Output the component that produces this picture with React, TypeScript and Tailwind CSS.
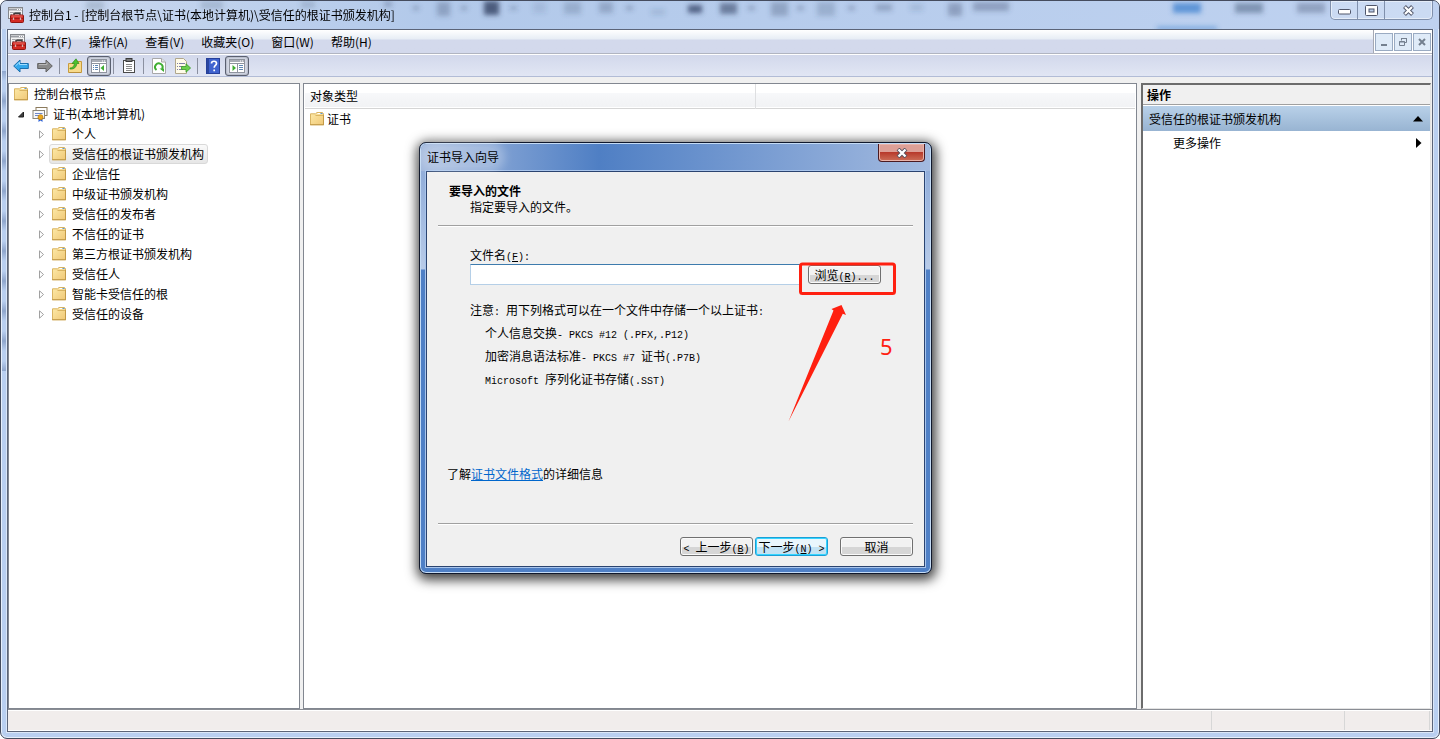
import { useState, type ReactNode } from 'react';

const stores = [
  '个人',
  '受信任的根证书颁发机构',
  '企业信任',
  '中级证书颁发机构',
  '受信任的发布者',
  '不信任的证书',
  '第三方根证书颁发机构',
  '受信任人',
  '智能卡受信任的根',
  '受信任的设备',
];

const menus = ['文件(F)', '操作(A)', '查看(V)', '收藏夹(O)', '窗口(W)', '帮助(H)'];

// x, y, width, height, opacity of the shapes showing through the glass title bar
const shades = [
  [85, 0, 18, 9, 0.2], [200, 0, 22, 8, 0.2], [300, 0, 14, 7, 0.2], [383, 0, 8, 6, 0.3],
  [412, 5, 6, 4, 0.35], [436, 1, 13, 14, 0.3], [460, 5, 6, 4, 0.35], [483, 0, 15, 14, 0.85],
  [509, 5, 7, 4, 0.3], [532, 1, 13, 11, 0.12], [563, 1, 17, 12, 0.22], [598, 1, 14, 11, 0.28],
  [625, 5, 7, 4, 0.35], [650, 8, 14, 6, 0.15], [687, 4, 14, 8, 0.8], [719, 2, 17, 11, 0.6],
  [747, 5, 7, 4, 0.35], [770, 1, 17, 14, 0.3], [796, 5, 7, 4, 0.35], [816, 1, 18, 14, 0.22],
  [847, 5, 7, 4, 0.35], [875, 3, 16, 7, 0.3], [909, 3, 13, 7, 0.15], [947, 2, 14, 13, 0.35],
  [972, 1, 36, 9, 0.35], [1234, 2, 28, 10, 0.45], [1296, 2, 28, 10, 0.35],
];

function ConsoleIcon() {
  return (
    <svg width="16" height="16" viewBox="0 0 16 16" className="shrink-0">
      <rect x="0.5" y="0.5" width="14" height="11" fill="#f4f4f4" stroke="#85888d" />
      <path d="M1 2.500h13" stroke="#9a9da3" strokeWidth="2" />
      <path d="M9 2.500h1M11 2.500h1M13 2.500h1" stroke="#fff" />
      <path d="M2 5.500h3M2 7.500h2M2 9.500h1M7 5.500h6" stroke="#a5a8ad" />
      <path d="M6 8V6.300h6V8" fill="none" stroke="#3c3c3c" strokeWidth="1.400" />
      <rect x="2.500" y="8" width="13" height="7.500" rx="1" fill="#d42c24" stroke="#8f1712" />
      <path d="M3.500 9h11" stroke="#ee7068" />
      <path d="M3 11.500h12" stroke="#a51b15" />
      <path d="M5.500 10.500v2.500M12.500 10.500v2.500" stroke="#d8b0ae" strokeWidth="1.300" />
    </svg>
  );
}

function FolderIcon() {
  return (
    <svg width="16" height="16" viewBox="0 0 16 16" className="shrink-0">
      <defs>
        <linearGradient id="folder" x1="0" y1="0" x2="1" y2="1">
          <stop offset="0" stopColor="#fdeaa8" />
          <stop offset="1" stopColor="#f0c877" />
        </linearGradient>
      </defs>
      <path d="M1.500 2.800h5L8 1.500h5.500l1 1.300v11h-13z" fill="url(#folder)" stroke="#d9b462" />
      <path d="M8.500 2.500h3" stroke="#fff" />
      <path d="M11.500 2.500h2" stroke="#5a97d6" />
      <path d="M6.500 4.500h8" stroke="#d9b462" />
      <path d="M14.500 4v10M1 13.700h14" stroke="#c29a48" />
    </svg>
  );
}

function CertIcon() {
  return (
    <svg width="16" height="16" viewBox="0 0 16 16" className="shrink-0">
      <rect x="4" y="1.500" width="11" height="8" fill="#fff" stroke="#8b7a5c" />
      <rect x="1" y="4.500" width="11.500" height="8" fill="#f8f8f8" stroke="#8b8577" />
      <path d="M3 7.500h7.500M3 9.500h4" stroke="#6d87c9" />
      <path d="M6.500 12v4l2-1.500 2 1.500v-4z" fill="#2d62d8" />
      <circle cx="8.500" cy="11.200" r="2.500" fill="#eba91c" stroke="#b9770c" strokeWidth="0.700" />
    </svg>
  );
}

function Expander({ open = false }: { open?: boolean }) {
  return (
    <svg width="9" height="9" viewBox="0 0 9 9" className="shrink-0">
      {open ? (
        <path d="M6.500 2v5h-5z" fill="#404040" stroke="#202020" />
      ) : (
        <path d="M2.500 0.800v7.400L6.500 4.500z" fill="#fff" stroke="#a0a0a0" />
      )}
    </svg>
  );
}

function PaneIcon({ right = false }: { right?: boolean }) {
  return (
    <svg width="18" height="16" viewBox="0 0 18 16">
      <rect x="1.500" y="1.500" width="15" height="13" fill="#fff" stroke="#8f949e" />
      <path d="M2 3h14" stroke="#a9adb6" strokeWidth="2" />
      <path d="M12 3h1M14 3h1" stroke="#fff" />
      <path d="M2 5.500h14M9.500 6v8" stroke="#8f949e" />
      {right ? (
        <>
          <path d="M4.500 7v6L8 10z" fill="#3fae32" />
          <path d="M11 7.500h4M11 9.500h4M11 11.500h4" stroke="#5f88b4" />
        </>
      ) : (
        <>
          <path d="M14 7v6l-3.500-3z" fill="#3fae32" />
          <path d="M3 7.500h1M5 7.500h3M3 9.500h1M5 9.500h3M3 11.500h1M5 11.500h3" stroke="#5f88b4" />
        </>
      )}
    </svg>
  );
}

function ToolButton({ label, active, children }: { label: string; active?: boolean; children: ReactNode }) {
  return (
    <button
      aria-label={label}
      className={`grid h-5 w-6 place-items-center rounded-[3px] border ${
        active ? 'border-[#5a6070] bg-[#d3d7e4] shadow-[inset_0_0_2px_#7a8090]' : 'border-transparent'
      }`}
    >
      {children}
    </button>
  );
}

function Separator() {
  return <span className="mr-[3px] ml-0.5 h-4 w-px bg-[#8b90a0]" />;
}

function Toolbar() {
  return (
    <div className="flex h-[23px] items-center border-t border-b border-t-white border-b-[#b2bcd6] bg-linear-to-b from-[#d2d8eb] to-[#e1e6f4] pl-px">
      <ToolButton label="后退">
        <svg width="16" height="14" viewBox="0 0 16 14">
          <path d="M0.700 7L7 1v3.500h8.300v5H7V13z" fill="#35a8ec" stroke="#1b6fae" />
          <path d="M2.500 7L6.500 3.200v2.300H14" fill="none" stroke="#9edcff" />
        </svg>
      </ToolButton>
      <ToolButton label="前进">
        <svg width="16" height="14" viewBox="0 0 16 14">
          <path d="M15.300 7L9 1v3.500H0.700v5H9V13z" fill="#8b8b8b" stroke="#626262" />
          <path d="M2 5.500h8V3.500" fill="none" stroke="#b9b9b9" />
        </svg>
      </ToolButton>
      <Separator />
      <ToolButton label="向上一级">
        <svg width="16" height="16" viewBox="0 0 16 16">
          <path d="M1.500 5.500h5l2-2h6v11h-13z" fill="#f7da8a" stroke="#c99c3e" />
          <path d="M2 14.500h12" stroke="#b98f3c" />
          <path d="M3 10c3 0 4-2 4.500-4.500H5L9 0.800l3 4.700H9.800C9.500 9 7 11.500 3 11z" fill="#4cc22e" stroke="#2f8a1b" strokeWidth="0.700" />
        </svg>
      </ToolButton>
      <ToolButton label="显示/隐藏控制台树" active>
        <PaneIcon />
      </ToolButton>
      <Separator />
      <ToolButton label="剪贴板">
        <svg width="14" height="16" viewBox="0 0 14 16">
          <rect x="1.500" y="2.500" width="11" height="12" fill="#fff" stroke="#4a4a4a" />
          <rect x="4" y="0.500" width="6" height="3" fill="#7a7a7a" stroke="#3a3a3a" />
          <path d="M4 6.500h6M4 8.500h6M4 10.500h6M4 12.500h6" stroke="#8a8a8a" />
        </svg>
      </ToolButton>
      <Separator />
      <ToolButton label="刷新">
        <svg width="14" height="16" viewBox="0 0 14 16">
          <path d="M0.500 0.500h9l4 3.500v11.500h-13z" fill="#fff" stroke="#a8a8a8" />
          <path d="M9.500 0.500V4h4" fill="#e6e6e6" stroke="#a8a8a8" />
          <path d="M4.500 12A3.700 3.700 0 1 1 10 11" fill="none" stroke="#3fae32" strokeWidth="2" />
          <path d="M7.500 10.500h4.500v3.500z" fill="#3fae32" />
        </svg>
      </ToolButton>
      <ToolButton label="导出列表">
        <svg width="16" height="16" viewBox="0 0 16 16">
          <path d="M0.500 0.500h8l3 3v12h-11z" fill="#fffbe8" stroke="#b0a78c" />
          <path d="M2 5.500h1M4 5.500h6M2 8.500h1M4 8.500h4M2 11.500h1M4 11.500h4" stroke="#7d7fa8" />
          <path d="M6.500 8.500H11V5.800l4.600 4.200-4.600 4.200v-2.700H6.500z" fill="#6bd04d" stroke="#3a9a26" strokeWidth="0.800" />
        </svg>
      </ToolButton>
      <Separator />
      <ToolButton label="帮助">
        <svg width="14" height="16" viewBox="0 0 14 16">
          <rect x="0.500" y="0.500" width="13" height="15" fill="#3f63cf" stroke="#26409a" />
          <path d="M2 1v14" stroke="#2b479f" strokeWidth="2" />
          <path d="M5.500 5.500c0-3 5-3 5 0 0 2-2.300 2-2.300 4.200M8.200 11.500v1.800" fill="none" stroke="#fff" strokeWidth="1.700" />
        </svg>
      </ToolButton>
      <ToolButton label="显示/隐藏操作窗格" active>
        <PaneIcon right />
      </ToolButton>
    </div>
  );
}

function Tree() {
  const [selected, setSelected] = useState(1);
  return (
    <section className="w-[292px] shrink-0 border border-[#828790] bg-white">
      <div className="flex h-5 items-center gap-[5px] pl-1">
        <FolderIcon />
        <span>控制台根节点</span>
      </div>
      <div className="flex h-5 items-center pl-2">
        <Expander open />
        <span className="ml-1.5 flex items-center gap-[5px]">
          <CertIcon />
          证书(本地计算机)
        </span>
      </div>
      <ul>
        {stores.map((name, i) => (
          <li key={name} className="flex h-5 items-center gap-[3px] pl-7">
            <Expander />
            <button
              onClick={() => setSelected(i)}
              className={`flex h-5 items-center gap-[5px] rounded-[3px] border px-px pr-[3px] ${
                i === selected
                  ? 'border-[#d9d9d9] bg-linear-to-b from-[#fafafa] to-[#e6e6e6]'
                  : 'border-transparent'
              }`}
            >
              <FolderIcon />
              {name}
            </button>
          </li>
        ))}
      </ul>
    </section>
  );
}

function ObjectList() {
  return (
    <section className="min-w-0 flex-1 border border-[#828790] bg-white px-px">
      <table className="w-full table-fixed border-collapse text-left">
        <thead>
          <tr className="h-6 border-b border-[#d5d5d5] bg-linear-to-b from-white from-40% via-[#f7f8fa] via-41% to-[#f1f2f4]">
            <th className="w-[450px] border-r border-[#dedfe1] pl-[5px] font-normal">对象类型</th>
            <th aria-label="空列" />
          </tr>
        </thead>
        <tbody>
          <tr>
            <td className="h-[22px] pl-1">
              <span className="flex items-center gap-0.5">
                <FolderIcon />
                证书
              </span>
            </td>
          </tr>
        </tbody>
      </table>
    </section>
  );
}

function Actions() {
  return (
    <aside className="ml-px w-[290px] shrink-0 border-t-2 border-r border-b border-l-2 border-t-[#6c6c6c] border-r-[#e3e3e3] border-b-[#e3e3e3] border-l-[#6c6c6c] bg-white">
      <h2 className="flex h-5 items-center border-b border-[#a0a0a0] bg-[#f0f0f0] pl-1 font-bold">操作</h2>
      <button className="mt-px flex h-[25px] w-full items-center justify-between bg-linear-to-b from-[#b9d1e9] to-[#98b4d2] pr-[7px] pl-1.5">
        受信任的根证书颁发机构
        <svg width="10" height="6" viewBox="0 0 10 6">
          <path d="M5 0l5 5.500H0z" />
        </svg>
      </button>
      <button className="flex h-6 w-full items-center justify-between pr-2 pl-[30px]">
        更多操作
        <svg width="6" height="10" viewBox="0 0 6 10">
          <path d="M0 0v10l5.500-5z" />
        </svg>
      </button>
    </aside>
  );
}

// half-width latin text, 6px per character beside 12px hanzi
function Half({ children }: { children: ReactNode }) {
  return <span className="font-['Liberation_Mono',monospace] text-[10px] leading-none whitespace-pre">{children}</span>;
}

function DialogButton({ children, primary }: { children: ReactNode; primary?: boolean }) {
  return (
    <button
      className={`flex h-[19px] w-[73px] items-center justify-center rounded-[3px] border whitespace-nowrap ${
        primary
          ? 'border-[#1c9fd6] bg-linear-to-b from-[#eaf6fc] from-50% to-[#c3e2f3] to-51% shadow-[inset_0_0_0_1px_#35d5ff]'
          : 'border-[#707070] bg-linear-to-b from-[#f2f2f2] from-50% to-[#d6d6d6] to-51% shadow-[inset_0_0_0_1px_#fafafa]'
      }`}
    >
      <span className="leading-4">{children}</span>
    </button>
  );
}

function ImportWizard() {
  const [file, setFile] = useState('');
  return (
    <div
      role="dialog"
      aria-label="证书导入向导"
      className="absolute top-[141px] left-[418px] w-[513px] rounded-[7px] border border-[#10182c] bg-[#5080c5] bg-linear-to-b from-[#86a5d5] via-[#b8cbe8] via-[126px] to-[#4f80c6] to-[127px] px-1.5 pb-1.5 shadow-[inset_0_0_0_1px_#c4dbf5,1px_3px_12px_3px_rgba(0,0,0,0.75)]"
    >
      <div className="-mx-[5px] mt-px flex h-[27px] items-start justify-between rounded-t-[6px] bg-linear-to-r from-[#a3b9dd] via-[#4f7fc4] via-35% to-[#a3badf] pl-1.5">
        <span className="mt-[3px] rounded-full bg-white/25 shadow-[0_0_8px_6px_rgba(255,255,255,0.25)]">证书导入向导</span>
        <button
          aria-label="关闭"
          className="mr-[5px] grid h-[18px] w-[47px] place-items-center rounded-b-[4px] border border-t-0 border-[#4b1a20] bg-linear-to-b from-[#dda097] from-45% via-[#b83a2c] via-50% to-[#cc6e58] shadow-[inset_0_0_0_1px_#e9b3aa]"
        >
          <svg width="12" height="10" viewBox="0 0 12 10">
            <path d="M2 1l8 8M10 1L2 9" stroke="#55505c" strokeWidth="4" />
            <path d="M2.500 1.500l7 7M9.500 1.500l-7 7" stroke="#fff" strokeWidth="2.400" />
          </svg>
        </button>
      </div>

      <div className="border border-[#2b4470] bg-[#f0f0f0] pb-[10px] shadow-[0_0_0_1px_#a9c5ec]">
        <div className="mx-[11px] h-[54px] border-b border-[#a0a0a0] pt-[11px] pl-[11px] leading-4 shadow-[0_1px_0_#fff]">
          <h1 className="font-bold">要导入的文件</h1>
          <p className="pl-[21px]">指定要导入的文件。</p>
        </div>

        <div className="h-[297px] pt-5 pl-[43px]">
          <label htmlFor="file" className="block h-[18px] leading-[18px]">
            文件名<Half>(<u>F</u>):</Half>
          </label>
          <div className="flex items-center">
            <input
              id="file"
              value={file}
              onChange={(e) => setFile(e.target.value)}
              className="h-[21px] w-[332px] border border-[#b5cfe7] border-t-[#3d7bad] bg-white px-1 outline-none"
            />
            <span className="ml-1.5">
              <DialogButton>
                浏览<Half>(<u>R</u>)...</Half>
              </DialogButton>
            </span>
          </div>
          <p className="mt-3.5 leading-[22px]">
            注意<Half>: </Half>用下列格式可以在一个文件中存储一个以上证书<Half>:</Half>
          </p>
          <ul className="pl-[15px] leading-[23px]">
            <li>
              个人信息交换<Half>- PKCS #12 (.PFX,.P12)</Half>
            </li>
            <li>
              加密消息语法标准<Half>- PKCS #7 </Half>证书<Half>(.P7B)</Half>
            </li>
            <li>
              <Half>Microsoft </Half>序列化证书存储<Half>(.SST)</Half>
            </li>
          </ul>
          <p className="mt-[74px] -ml-[23px]">
            了解
            <a href="#formats" className="text-[#0066cc] underline">
              证书文件格式
            </a>
            的详细信息
          </p>
        </div>

        <div className="mx-[11px] flex justify-end border-t border-[#a0a0a0] pt-[13px] shadow-[inset_0_1px_0_#fff]">
          <DialogButton>
            <Half>&lt; </Half>上一步<Half>(<u>B</u>)</Half>
          </DialogButton>
          <span className="mr-3 ml-0.5">
            <DialogButton primary>
              下一步<Half>(<u>N</u>) &gt;</Half>
            </DialogButton>
          </span>
          <DialogButton>取消</DialogButton>
        </div>
      </div>
    </div>
  );
}

function Annotation() {
  return (
    <div className="pointer-events-none absolute top-[261px] left-[787px] text-[#ff2010]">
      <svg width="110" height="160" viewBox="0 0 110 160" fill="currentColor">
        <rect x="12.500" y="2" width="94" height="29.500" rx="2" fill="none" stroke="currentColor" strokeWidth="3" />
        <path d="M53.500 43L58 53l-3.200-1.200L0.500 159.500 45.500 48.500 43.500 47z" />
      </svg>
      <span className="absolute top-[68px] left-[92px] font-['Noto_Sans',sans-serif] text-[22px] leading-8">5</span>
    </div>
  );
}

function TitleBar() {
  return (
    <header className="relative flex h-7 items-center overflow-hidden rounded-t-[6px] bg-linear-to-r from-[#cddaf0] via-[#b2c9ea] via-30% to-[#bfd2f0]">
      <svg className="absolute top-0 left-0 h-7 w-[1340px]" viewBox="0 0 1340 28">
        <defs>
          <filter id="soft" x="-20" y="-20" width="1380" height="68" filterUnits="userSpaceOnUse">
            <feGaussianBlur stdDeviation="2.600" />
          </filter>
        </defs>
        <g filter="url(#soft)">
          {shades.map(([x, y, w, h, o]) => (
            <rect key={x} x={x} y={y} width={w} height={h} fill="#38496a" opacity={o} />
          ))}
          <rect x="1172" y="2" width="28" height="10" fill="#3e82cf" opacity="0.750" />
          <rect x="1156" y="26" width="60" height="3" fill="#3e82cf" opacity="0.700" />
        </g>
      </svg>
      <div className="relative flex items-center gap-[5px] pl-[7px]">
        <ConsoleIcon />
        <span>控制台1 - [控制台根节点\证书(本地计算机)\受信任的根证书颁发机构]</span>
      </div>
      <div className="relative mr-1.5 ml-auto flex h-[19px] self-start rounded-b-[5px] border border-t-0 border-[#8090ac] bg-white/20 shadow-[inset_0_0_0_1px_rgba(255,255,255,0.5)]">
        <button aria-label="最小化" className="grid w-[27px] place-items-center border-r border-[#8090ac] pt-1">
          <svg width="13" height="6" viewBox="0 0 13 6">
            <rect x="0.500" y="0.500" width="12" height="4.500" rx="1" fill="#fff" stroke="#50566a" />
          </svg>
        </button>
        <button aria-label="最大化" className="grid w-[27px] place-items-center border-r border-[#8090ac]">
          <svg width="13" height="11" viewBox="0 0 13 11">
            <rect x="0.500" y="0.500" width="12" height="10" rx="1" fill="#fff" stroke="#50566a" />
            <rect x="4" y="4" width="5" height="3" fill="#b9cce9" stroke="#50566a" />
          </svg>
        </button>
        <button aria-label="关闭" className="grid w-[47px] place-items-center">
          <svg width="13" height="11" viewBox="0 0 13 11">
            <path d="M2.500 1.500l8 8M10.500 1.500l-8 8" stroke="#50566a" strokeWidth="4" />
            <path d="M3 2l7 7M10 2L3 9" stroke="#fff" strokeWidth="2.200" />
          </svg>
        </button>
      </div>
    </header>
  );
}

function MenuBar() {
  return (
    <nav className="flex h-6 items-center border-b border-[#b1b5c1] bg-linear-to-b from-white via-[#e7edf5] via-[9px] to-[#d3d9ec] to-[10px]">
      <span className="ml-0.5">
        <ConsoleIcon />
      </span>
      <div className="flex gap-[17px] pl-[7px]">
        {menus.map((m) => (
          <button key={m}>{m}</button>
        ))}
      </div>
      <div className="ml-auto flex h-full items-center gap-px border-l border-[#a5a9b4] bg-white pr-px pl-px">
        <button aria-label="最小化子窗口" className="grid size-[18px] place-items-center border border-[#9aabc2] bg-[#dfebf8]">
          <svg width="10" height="10" viewBox="0 0 10 10">
            <path d="M2 8h6" stroke="#74808f" strokeWidth="2" />
          </svg>
        </button>
        <button aria-label="还原子窗口" className="grid size-[18px] place-items-center border border-[#9aabc2] bg-[#dfebf8]">
          <svg width="10" height="10" viewBox="0 0 10 10">
            <path d="M3.500 3.500V1.500h5v4h-2M3 1.500h6" fill="none" stroke="#74808f" />
            <path d="M1.500 4.500h5v4h-5zM1 5h6" fill="none" stroke="#74808f" />
          </svg>
        </button>
        <button aria-label="关闭子窗口" className="grid size-[18px] place-items-center border border-[#9aabc2] bg-[#dfebf8]">
          <svg width="10" height="10" viewBox="0 0 10 10">
            <path d="M2 2l6 6M8 2L2 8" stroke="#74808f" strokeWidth="2" />
          </svg>
        </button>
      </div>
    </nav>
  );
}

export default function App() {
  return (
    <div className="relative flex min-h-screen flex-col overflow-hidden rounded-[7px] border border-[#454c5e] bg-[#b9cff0] font-['Noto_Sans_CJK_SC',sans-serif] text-[12px] leading-5 text-black shadow-[inset_0_0_0_1px_#e6effb]">
      <TitleBar />
      <span className="absolute top-[70px] left-px h-[300px] w-1 bg-[repeating-linear-gradient(#8fa6cc_0px,#b9cff0_10px,#b9cff0_20px,#8fa6cc_30px)]" />
      <div className="mx-1.5 mb-1.5 flex flex-1 flex-col border border-[#5b6478] bg-[#f0f0f0] shadow-[0_0_0_1px_#dbe7f8]">
        <MenuBar />
        <Toolbar />
        <main className="flex flex-1 gap-[3px] pt-1.5 pr-px">
          <Tree />
          <ObjectList />
          <Actions />
        </main>
        <footer className="flex h-[22px] border-t border-[#8a8d94] bg-[#f1edec] py-px shadow-[inset_0_1px_0_#fff,inset_0_-1px_0_#fff]">
          <span className="flex-1 border-r border-[#d7d7d7]" />
          <span className="w-[133px] border-r border-[#d7d7d7]" />
          <span className="mr-0.5 w-[85px] border-r border-[#d7d7d7]" />
        </footer>
      </div>
      <ImportWizard />
      <Annotation />
    </div>
  );
}
